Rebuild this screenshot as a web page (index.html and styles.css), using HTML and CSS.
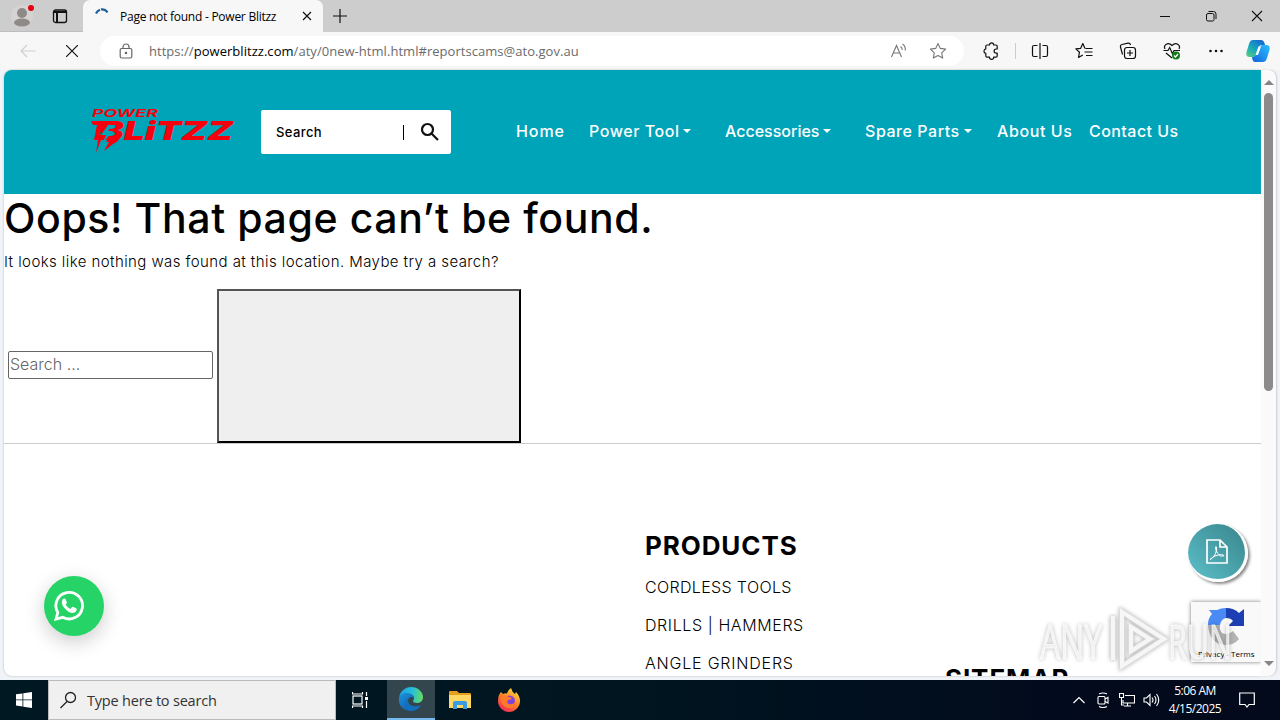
FILE: index.html
```html
<!DOCTYPE html>
<html lang="en">
<head>
    <meta charset="UTF-8">
    <meta name="viewport" content="width=device-width, initial-scale=1.0">
    <title>Page not found - Power Blitzz</title>
    <link rel="stylesheet" href="styles.css">
</head>
<body>
    <div class="screen">

        <!-- tab strip -->
        <div class="tab-strip">
            <div class="tab-tools">
                <svg class="profile" width="24" height="32" viewBox="0 0 24 32">
                    <circle cx="12" cy="16" r="11" fill="#d6d3d2"/>
                    <circle cx="12" cy="13" r="5" fill="#8d8a88"/>
                    <ellipse cx="12" cy="22.5" rx="8" ry="4" fill="#8d8a88"/>
                    <circle cx="21" cy="8" r="3" fill="#e3000f"/>
                </svg>
                <svg width="16" height="16" viewBox="0 0 16 16" fill="none" stroke="#111" stroke-width="1.3">
                    <rect x="1.5" y="2" width="13" height="12.5" rx="2"/>
                    <path d="M1.5 4h13M5 4v10" stroke-width="2"/>
                </svg>
            </div>
            <div class="tab">
                <svg width="16" height="16" viewBox="0 0 16 16" fill="none" stroke="#1b5f9f" stroke-width="2.2">
                    <path d="M2 5.500A7 7 0 0 1 6 1.700M7 1.400A7 7 0 0 1 13.500 4.300"/>
                </svg>
                <span class="tab-title">Page not found - Power Blitzz</span>
                <svg class="tab-close" width="10" height="10" viewBox="0 0 10 10" stroke="#111" stroke-width="1.2"><path d="M1 1l8 8M9 1l-8 8"/></svg>
            </div>
            <svg class="new-tab" width="14" height="14" viewBox="0 0 14 14" stroke="#111" stroke-width="1.2"><path d="M7 0v14M0 7h14"/></svg>
            <div class="window-buttons">
                <svg width="12" height="12" viewBox="0 0 12 12" stroke="#111"><path d="M1 6.500h10"/></svg>
                <svg width="12" height="12" viewBox="0 0 12 12" fill="none" stroke="#111"><rect x="1.500" y="3.500" width="7.500" height="7.500" rx="1.500"/><path d="M3.500 1.500H8.500a2.500 2.500 0 0 1 2.500 2.500V9"/></svg>
                <svg width="12" height="12" viewBox="0 0 12 12" stroke="#111" stroke-width="1.100"><path d="M1 1l10 10M11 1L1 11"/></svg>
            </div>
        </div>

        <!-- address bar -->
        <div class="toolbar">
            <svg class="back" width="16" height="14" viewBox="0 0 16 14" fill="none" stroke="#cfcfcf" stroke-width="1.200"><path d="M15.500 7H1M7 1L1 7l6 6"/></svg>
            <svg class="stop" width="12" height="12" viewBox="0 0 12 12" stroke="#111" stroke-width="1.200"><path d="M0 0l12 12M12 0L0 12"/></svg>
            <div class="address">
                <svg width="14" height="16" viewBox="0 0 14 16" fill="none" stroke="#666" stroke-width="1.200"><rect x="1.200" y="5.500" width="11.600" height="9.500" rx="1.500"/><path d="M4 5.500V4a3 3 0 0 1 6 0v1.500"/><circle cx="7" cy="10" r=".7" fill="#666"/></svg>
                <span class="url">https://<b>powerblitzz.com</b>/aty/0new-html.html#reportscams@ato.gov.au</span>
                <svg width="18" height="16" viewBox="0 0 18 16" fill="none" stroke="#777" stroke-width="1.100"><path d="M1.500 14L6.500 2.500 11.500 14M3.200 10h6.600M10.500 3.500q1.800 1.200 1.700 3.500M12.500 1q3.200 2 2.800 6.500"/></svg>
                <svg class="star" width="18" height="18" viewBox="0 0 18 18" fill="none" stroke="#777" stroke-width="1.100" stroke-linejoin="round"><path d="M9 1.500l2.300 4.900 5.300.7-3.900 3.700 1 5.300L9 13.500l-4.700 2.600 1-5.300L1.400 7.100l5.300-.7z"/></svg>
            </div>
            <svg class="puzzle" width="18" height="18" viewBox="0 0 18 18" fill="none" stroke="#111" stroke-width="1.200" stroke-linejoin="round"><path d="M5 3h2.500a2.100 2.100 0 0 1 4.200 0H14a1.200 1.200 0 0 1 1.200 1.200V7h-1a2.100 2.100 0 0 0 0 4.200h1V14a1.200 1.200 0 0 1-1.200 1.200h-2.300a2.100 2.100 0 0 1-4.200 0H5A1.200 1.200 0 0 1 3.800 14v-2.600a2.300 2.300 0 0 1 0-4.500V4.200A1.200 1.200 0 0 1 5 3z"/></svg>
            <span class="divider"></span>
            <svg class="split" width="18" height="16" viewBox="0 0 18 16" fill="none" stroke="#111" stroke-width="1.200"><path d="M6.500 2.500H3a1.500 1.500 0 0 0-1.500 1.500v8A1.500 1.500 0 0 0 3 13.500h3.500M11.500 2.500H15a1.500 1.500 0 0 1 1.500 1.500v8a1.500 1.500 0 0 1-1.500 1.500h-3.500M9 0v16"/></svg>
            <svg class="favorites" width="18" height="18" viewBox="0 0 18 18" fill="none" stroke="#111" stroke-width="1.200" stroke-linejoin="round"><path d="M10 6.500L7.800 1.500 5.700 6.300l-4.900.6 3.700 3.300-1 5.300 4.300-2.500M10.500 6.500h7M9.500 10h8M11 13.500h6.500"/></svg>
            <svg class="collections" width="18" height="18" viewBox="0 0 18 18" fill="none" stroke="#111" stroke-width="1.200"><rect x="5.500" y="5.500" width="11" height="11" rx="2.500"/><path d="M11 8v6M8 11h6M3.500 12.500L1.500 5Q1 3 3 2.500L9 1.200q2-.4 2.500 1.800"/></svg>
            <svg class="health" width="18" height="18" viewBox="0 0 18 18" fill="none" stroke="#111" stroke-width="1.200"><path d="M2 7C0 3 5-.5 9 3.500 13-.5 18 3 16 7M.5 8.500H5l1.700-3 2.600 6 1.700-3h6M3 11l6 5"/><circle cx="13" cy="13.500" r="4" fill="#127b17" stroke="none"/><path d="M11 13.500l1.500 1.500 2.500-3" stroke="#fff"/></svg>
            <svg class="dots" width="14" height="4" viewBox="0 0 14 4" fill="#111"><circle cx="1.500" cy="2" r="1.300"/><circle cx="7" cy="2" r="1.300"/><circle cx="12.500" cy="2" r="1.300"/></svg>
            <svg class="copilot" width="24" height="24" viewBox="0 0 24 24">
                <defs>
                    <linearGradient id="cop-a" x1="0" y1="1" x2=".8" y2="0"><stop offset="0" stop-color="#5bd37a"/><stop offset=".5" stop-color="#15a6c0"/><stop offset="1" stop-color="#1766cf"/></linearGradient>
                    <linearGradient id="cop-b" x1="0" y1="1" x2="1" y2="0"><stop offset="0" stop-color="#1463dc"/><stop offset="1" stop-color="#29c0ff"/></linearGradient>
                </defs>
                <path d="M7 1h8q3 0 4 5h-3q-3 0-4 4l-1.500 5q-1 3-4 3H3.500Q-.5 18 .5 13L3 5q1-4 4-4z" fill="url(#cop-a)"/>
                <path d="M17 6h3.500q4 0 3 5l-2.500 8q-1.200 4-4 4H9q-2.500 0-3-5 3 0 4.500-3L13 10q1-4 4-4z" fill="url(#cop-b)"/>
                <path d="M12.500 7.500h2.500L12 16H9.500z" fill="#fff"/>
            </svg>
        </div>

        <div class="browser-view">
            <div class="page">
                <header class="site-header">
                    <svg class="logo" width="146" height="50" viewBox="0 0 146 50" fill="#f5000c">
                        <text class="logo-top" x="2" y="10" textLength="66" lengthAdjust="spacingAndGlyphs">POWER</text>
                        <text class="logo-main" x="9" y="33" textLength="134" lengthAdjust="spacingAndGlyphs">BLiTZZ</text>
                        <!-- lightning bolts under the B -->
                        <path d="M1 14h14l-2 4H3z"/>
                        <path d="M18 18l-7 10h5l-4 9 11-13h-5l5-6z" fill="#00a4b9"/>
                        <path d="M7 18h7L9 28h4L6 46l2-13H4z"/>
                        <path d="M20 29h11q-2 5-8 8l-9 7 5-9h-3z"/>
                    </svg>
                    <form class="header-search" action="#">
                        <input type="text" placeholder="Search">
                        <svg width="20" height="20" viewBox="0 0 20 20" fill="none" stroke="#111" stroke-width="2.200"><circle cx="7.500" cy="7.500" r="5.500"/><path d="M11.500 11.500l6.500 6.500"/></svg>
                    </form>
                    <nav class="main-nav">
                        <a class="home">Home</a>
                        <a class="power drop">Power Tool</a>
                        <a class="accessories drop">Accessories</a>
                        <a class="spare drop">Spare Parts</a>
                        <a class="about">About Us</a>
                        <a class="contact">Contact Us</a>
                    </nav>
                </header>

                <main class="not-found">
                    <h1>Oops! That page can’t be found.</h1>
                    <p>It looks like nothing was found at this location. Maybe try a search?</p>
                    <form class="search-form" action="#">
                        <input type="text" placeholder="Search ...">
                        <button type="button"></button>
                    </form>
                </main>

                <footer class="site-footer">
                    <div class="products">
                        <h3>PRODUCTS</h3>
                        <ul>
                            <li class="cordless">CORDLESS TOOLS</li>
                            <li class="drills">DRILLS | HAMMERS</li>
                            <li class="grinders">ANGLE GRINDERS</li>
                        </ul>
                    </div>
                    <div class="sitemap">
                        <h3>SITEMAP</h3>
                    </div>
                </footer>

                <a class="whatsapp">
                    <svg width="32" height="32" viewBox="0 0 32 32" fill="none" stroke="#fff"><path d="M3 29l1.800-6.500A13.300 13.300 0 1 1 9.800 27.300z" stroke-width="2.800"/><path d="M9.500 9.500q1.500-1.700 2.800-.8l1.600 3.500q.2.800-1.300 2.300 1.500 3 4.800 4.500l1.700-1.900q.6-.5 1.300-.1l3.200 1.600q.6 3.800-4 4.400-3.600 0-7.600-4.200-4.700-5-2.500-9.300z" fill="#fff" stroke="none"/></svg>
                </a>
                <a class="pdf">
                    <svg width="22" height="25" viewBox="0 0 22 25" fill="none" stroke="#fff" stroke-width="1.700"><path d="M1 1h13l7 7v16H1zM14 1v7h7"/><path d="M4 20.500q5-2 6.500-9.500.5-4-.7-3.500-1 2 1.500 6.500 3 4.500 6.500 3 .5-1.700-4.500-1.200-6.300.7-9.300 4.700z" stroke-width="1"/></svg>
                </a>
                <div class="recaptcha">
                    <svg width="40" height="42" viewBox="0 0 40 42">
                        <path d="M20 3v10q-5 1-6 7H2Q2 13 6 9L3 5h8q4-2 9-2z" fill="#4a8af4"/>
                        <path d="M20 3q8 0 13 5l5-4v17H22l5-5q-2-3-7-3z" fill="#1c3fb2"/>
                        <path d="M2 20h12q-1 9 6 9 4 0 7-3l6 8q-5 6-13 6Q3 39 2 20z" fill="#b4b4b4"/>
                    </svg>
                    <span>Privacy - Terms</span>
                </div>
            </div>
            <div class="scrollbar">
                <span class="arrow up"></span>
                <span class="thumb"></span>
                <span class="arrow down"></span>
            </div>
        </div>

        <!-- recording watermark -->
        <svg class="watermark" width="200" height="66" viewBox="0 0 200 66">
            <text x="4" y="53" textLength="62" lengthAdjust="spacingAndGlyphs">ANY</text>
            <path class="edge" d="M77 10v44M86 6v54l42-27zM95 21v24l19-12z"/>
            <path d="M77 10v44M86 6v54l42-27zM95 21v24l19-12z"/>
            <text x="132" y="53" textLength="64" lengthAdjust="spacingAndGlyphs">RUN</text>
        </svg>

        <div class="taskbar">
            <div class="start">
                <svg width="16" height="16" viewBox="0 0 16 16" fill="#fff"><path d="M0 2.300l6.500-.9v6.100H0zM7.300 1.300L16 0v7.500H7.300zM0 8.300h6.500v6.200L0 13.600zM7.300 8.300H16V16l-8.700-1.300z"/></svg>
            </div>
            <div class="task-search">
                <svg width="18" height="18" viewBox="0 0 18 18" fill="none" stroke="#222" stroke-width="1.300"><circle cx="10.500" cy="6.500" r="5"/><path d="M7 10.500L.5 17"/></svg>
                <span>Type here to search</span>
            </div>
            <div class="task-item">
                <svg width="18" height="18" viewBox="0 0 18 18" fill="none" stroke="#fff" stroke-width="1.200"><rect x="1" y="5" width="9" height="8"/><path d="M.5 1v2h10V1M.5 17v-2h10v2M14.500 1v4M14.500 10v7"/><path d="M13 6h3v3h-3z" fill="#fff" stroke="none"/></svg>
            </div>
            <div class="task-item active">
                <svg width="26" height="26" viewBox="0 0 26 26">
                    <defs>
                        <linearGradient id="edge-a" x1="0" y1=".3" x2="1" y2=".4"><stop offset="0" stop-color="#1d9de3"/><stop offset=".55" stop-color="#27bfd8"/><stop offset="1" stop-color="#63dc63"/></linearGradient>
                        <linearGradient id="edge-b" x1="0" y1="0" x2="1" y2="1"><stop offset="0" stop-color="#1c94dd"/><stop offset="1" stop-color="#104c9b"/></linearGradient>
                    </defs>
                    <path d="M1 12C2 5 7 1 13 1c7 0 12 5 12 10 0 4-3 6-6 6s-4-1-4-2c0-.6 1-1 1-3 0-2-2-4-5-4-5 0-9 1-10 4z" fill="url(#edge-a)"/>
                    <path d="M1 12c1-3 4-5 8-5 5 0 7 3 7 5-2-2-6-1-6 3 0 5 7 7 13 4-2 4-6 6-10 6C5 25 0 19 1 12z" fill="url(#edge-b)"/>
                    <path d="M10 15c0 5 7 7 13 4-4 6-10 7-13 5-4-3-4-9 0-12z" fill="#1370bd"/>
                </svg>
            </div>
            <div class="task-item">
                <svg width="22" height="20" viewBox="0 0 22 20"><path d="M0 2q0-1 1-1h7l2 2h11q1 0 1 1v14H0z" fill="#e5a11e"/><path d="M0 5h22v13H0z" fill="#ffd764"/><path d="M4 19v-6q0-2 2-2h10q2 0 2 2v6h-4v-4H8v4z" fill="#3b9be0"/></svg>
            </div>
            <div class="task-item">
                <svg width="24" height="24" viewBox="0 0 24 24">
                    <defs><linearGradient id="fox" x1=".8" y1="0" x2=".2" y2="1"><stop offset="0" stop-color="#ffe240"/><stop offset=".5" stop-color="#ff8024"/><stop offset="1" stop-color="#f0225d"/></linearGradient></defs>
                    <path d="M4 4l2 2q2-1 4-.500Q11 2 14 0q1 4 4 6l1-2q4 4 4 9c0 6-5 11-11 11S1 19 1 13q0-6 3-9z" fill="url(#fox)"/>
                    <circle cx="12.500" cy="13" r="5.500" fill="#8044dd"/>
                    <path d="M4 9q4-3 8 0l3 1q-1 2-4 2-2 3 1 4 4 1 6-2 0 6-6 6-7-1-8-7z" fill="#ff7a29"/>
                </svg>
            </div>
            <div class="tray">
                <svg class="chevron" width="12" height="8" viewBox="0 0 12 8" fill="none" stroke="#fff" stroke-width="1.200"><path d="M.5 7L6 1.500 11.500 7"/></svg>
                <svg class="meet" width="12" height="16" viewBox="0 0 12 16" fill="none" stroke="#fff" stroke-width="1.100"><rect x="1" y="4.500" width="7" height="7.500" rx="1"/><path d="M8 7l3-1.500v5.500L8 9.500M2 2q4-2 8 0M2 14.500q4 2 8 0"/></svg>
                <svg class="network" width="16" height="14" viewBox="0 0 16 14" fill="none" stroke="#fff" stroke-width="1.100"><path d="M6 2.500h9.500V10H4V7M5 13h7M8.500 10v3M.5.500h4v4h-4zM2.500 4.500V7M2.500 7V12H5"/></svg>
                <svg class="volume" width="17" height="14" viewBox="0 0 17 14" fill="none" stroke="#fff" stroke-width="1.100"><path d="M1 5h2.500L7 1.500v11L3.500 9H1zM9 4.500q2 2.500 0 5M11.500 3q3 4 0 8M13.500 1q4.500 6 0 12"/></svg>
                <div class="clock"><span>5:06 AM</span><span>4/15/2025</span></div>
                <svg class="notice" width="16" height="16" viewBox="0 0 16 16" fill="none" stroke="#fff" stroke-width="1.200"><path d="M.7 1h14.600v11.500H10L8 15l-2-2.500H.7z"/></svg>
            </div>
        </div>
    </div>
</body>
</html>
```
FILE: styles.css
```css
* {
    margin: 0;
    padding: 0;
    box-sizing: border-box;
}

body {
    overflow: hidden;
    font-family: "Open Sans", sans-serif;
}

svg {
    display: block;
    flex: none;
}

.screen {
    width: 1280px;
    height: 720px;
    display: flex;
    flex-direction: column;
    background-color: #f7f7f7;
    position: relative;
    white-space: nowrap;
}

/* tab strip */
.tab-strip {
    height: 32px;
    display: flex;
    align-items: center;
    background-color: #cdcdcd;
}

.tab-tools {
    width: 83px;
    height: 32px;
    display: flex;
    align-items: center;
    gap: 18px;
    padding-left: 10px;
    border-bottom: 1px solid #bdbdbd;
}

.tab {
    width: 240px;
    height: 32px;
    display: flex;
    align-items: center;
    padding: 0 11px;
    background-color: #f7f7f7;
    border-radius: 7px 7px 0 0;
}

.tab-title {
    flex: 1;
    margin-left: 10px;
    font-size: 12px;
    letter-spacing: -0.25px;
}

.new-tab {
    margin-left: 10px;
}

.window-buttons {
    display: flex;
    gap: 34px;
    margin-left: auto;
    padding-right: 17px;
}

/* address bar */
.toolbar {
    height: 38px;
    display: flex;
    align-items: center;
    padding-left: 20px;
}

.stop {
    margin-left: 30px;
}

.address {
    width: 864px;
    height: 30px;
    margin-left: 22px;
    padding: 0 17px 0 19px;
    display: flex;
    align-items: center;
    background-color: #fff;
    border-radius: 15px;
}

.url {
    flex: 1;
    margin-left: 16px;
    font-size: 13px;
    color: #6b6b6b;
    letter-spacing: 0.04px;
}

.url b {
    font-weight: 400;
    color: #000;
}

.star {
    margin-left: 21px;
}

.puzzle {
    margin-left: 18px;
}

.divider {
    width: 1px;
    height: 16px;
    margin-left: 15px;
    background-color: #ccc;
}

.split {
    margin-left: 15px;
}

.favorites,
.collections,
.health {
    margin-left: 26px;
}

.dots {
    margin-left: 28px;
}

.copilot {
    margin-left: 23px;
}

/* page area */
.browser-view {
    height: 610px;
    display: flex;
    padding: 0 4px 4px;
    background-color: #f0f3f7;
}

.page {
    width: 1257px;
    height: 606px;
    overflow: hidden;
    position: relative;
    background-color: #fff;
    border-radius: 8px 0 0 8px;
    box-shadow: 0 0 2px #aaa;
    font-family: Inter, sans-serif;
    color: #000;
}

.scrollbar {
    width: 15px;
    height: 606px;
    display: flex;
    flex-direction: column;
    align-items: center;
    padding: 10px 0;
    position: relative;
    background-color: #fafafa;
    border-radius: 0 8px 8px 0;
    box-shadow: 1px 0 2px #ccc;
}

.arrow {
    border: 5px solid transparent;
}

.arrow.up {
    border-top: 0;
    border-bottom: 5px solid #858585;
}

.arrow.down {
    margin-top: auto;
    border-bottom: 0;
    border-top: 5px solid #858585;
}

.thumb {
    width: 9px;
    height: 298px;
    margin-top: 8px;
    background-color: #8b8b8b;
    border-radius: 5px;
}

.site-header {
    height: 124px;
    display: flex;
    align-items: center;
    padding-left: 86px;
    background-color: #00a4b9;
}

.logo {
    overflow: visible;
}

.logo text {
    font-style: italic;
    font-weight: 900;
}

.logo text.logo-top {
    font-size: 11px;
    font-weight: 700;
}

.logo-main {
    font-size: 26px;
}

.header-search {
    width: 190px;
    height: 44px;
    margin-left: 25px;
    padding: 0 11px 0 15px;
    display: flex;
    align-items: center;
    background-color: #fff;
    border-radius: 2px;
}

.header-search input {
    width: 128px;
    height: 15px;
    border: 0;
    border-right: 1px solid #000;
    font: 500 13px Inter, sans-serif;
    letter-spacing: 0.4px;
}

.header-search input::placeholder {
    color: #000;
}

.header-search svg {
    margin-left: auto;
}

.main-nav {
    display: flex;
    margin: -2px 0 0 65px;
    font-size: 16px;
    font-weight: 550;
    color: #fff;
}

.home { width: 73px; letter-spacing: 0.9px; }
.power { width: 136px; letter-spacing: 0.55px; }
.accessories { width: 140px; letter-spacing: 0; }
.spare { width: 132px; letter-spacing: 0.55px; }
.about { width: 92px; letter-spacing: 0.6px; }
.contact { letter-spacing: 0.45px; }

.drop::after {
    content: "";
    display: inline-block;
    margin-left: 4px;
    vertical-align: 4px;
    border: 4px solid transparent;
    border-top-color: #fff;
    border-bottom: 0;
}

.not-found {
    height: 250px;
    border-bottom: 1px solid #ccc;
}

.not-found h1 {
    height: 56px;
    font-size: 41px;
    line-height: 49px;
    font-weight: 450;
    letter-spacing: 0.6px;
}

.not-found p {
    height: 39px;
    font-size: 15px;
    line-height: 23px;
    font-weight: 300;
    letter-spacing: 0.42px;
}

.search-form {
    display: flex;
    align-items: center;
    padding-left: 4px;
}

.search-form input {
    width: 205px;
    height: 28px;
    margin-bottom: 2px;
    padding: 0 1px 2px;
    border: 1px solid #666;
    border-radius: 2px;
    font: 300 16px Inter, sans-serif;
}

.search-form input::placeholder {
    color: #666;
}

.search-form button {
    width: 304px;
    height: 154px;
    margin-left: 4px;
    background-color: #efefef;
    border: 2px outset #000;
}

.site-footer {
    display: flex;
    padding: 83px 0 0 641px;
}

.site-footer h3 {
    font-size: 26px;
    line-height: 38px;
    font-weight: 700;
    letter-spacing: 0.9px;
}

.products {
    width: 300px;
}

.products ul {
    margin-top: 3px;
    list-style: none;
    font-size: 16px;
    line-height: 38px;
    font-weight: 300;
}

.cordless { letter-spacing: 0.35px; }
.drills { letter-spacing: 0.6px; }
.grinders { letter-spacing: 0.8px; }

.sitemap {
    padding-top: 133px;
}

/* floating buttons */
.whatsapp {
    width: 60px;
    height: 60px;
    position: absolute;
    left: 40px;
    top: 506px;
    padding: 14px 9px;
    border-radius: 50%;
    background-color: #25d366;
    box-shadow: 0 6px 20px rgba(0, 0, 0, 0.2);
}

.pdf {
    width: 60px;
    height: 58px;
    position: absolute;
    left: 1184px;
    top: 454px;
    display: flex;
    align-items: center;
    justify-content: center;
    border: solid #fff;
    border-width: 0 3px 3px 0;
    border-radius: 50%;
    background: linear-gradient(45deg, #5cbfc9, #38858b);
    box-shadow: 2px 2px 3px #888;
}

.recaptcha {
    width: 70px;
    height: 60px;
    position: absolute;
    right: 0;
    top: 532px;
    padding: 3px 0 0 7px;
    background-color: #f9f9f9;
    box-shadow: 0 0 4px #777;
}

.recaptcha svg {
    margin-left: 8px;
}

.recaptcha span {
    display: block;
    font: 8px/14px "Open Sans", sans-serif;
}

.watermark {
    position: absolute;
    left: 1036px;
    top: 606px;
    fill: rgba(255, 255, 255, 0.7);
    stroke: rgba(255, 255, 255, 0.7);
    stroke-width: 1;
    filter: drop-shadow(0 0 2px rgba(0, 0, 0, 0.35));
}

.watermark text {
    font: 48px "Open Sans", sans-serif;
}

.watermark path {
    fill: none;
    stroke: rgba(250, 250, 250, 0.9);
    stroke-width: 4;
}

.watermark .edge {
    stroke: rgba(225, 225, 225, 0.7);
    stroke-width: 6;
}

/* taskbar */
.taskbar {
    height: 40px;
    display: flex;
    background: linear-gradient(90deg, #001821, #001520 50%, #020a1c 85%);
}

.start {
    width: 48px;
    display: flex;
    align-items: center;
    justify-content: center;
}

.task-search {
    width: 288px;
    display: flex;
    align-items: center;
    gap: 9px;
    padding-left: 11px;
    background-color: #f0f0f0;
    border: 1px solid #bbb;
    font-size: 14.5px;
    letter-spacing: -0.2px;
    color: #333;
}

.task-item {
    width: 49px;
    display: flex;
    align-items: center;
    justify-content: center;
}

.task-item.active {
    width: 48px;
    margin-left: 2px;
    background-color: #33464e;
    border-bottom: 2px solid #76b9ed;
}

.tray {
    display: flex;
    align-items: center;
    margin-left: auto;
    padding-right: 25px;
    color: #fff;
}

.meet {
    margin-left: 12px;
}

.network {
    margin-left: 10px;
}

.volume {
    margin-left: 8px;
}

.clock {
    width: 60px;
    display: flex;
    flex-direction: column;
    align-items: center;
    margin-left: 5px;
    font-size: 12px;
    line-height: 18px;
    letter-spacing: -0.5px;
}

.notice {
    margin-left: 14px;
}
```
